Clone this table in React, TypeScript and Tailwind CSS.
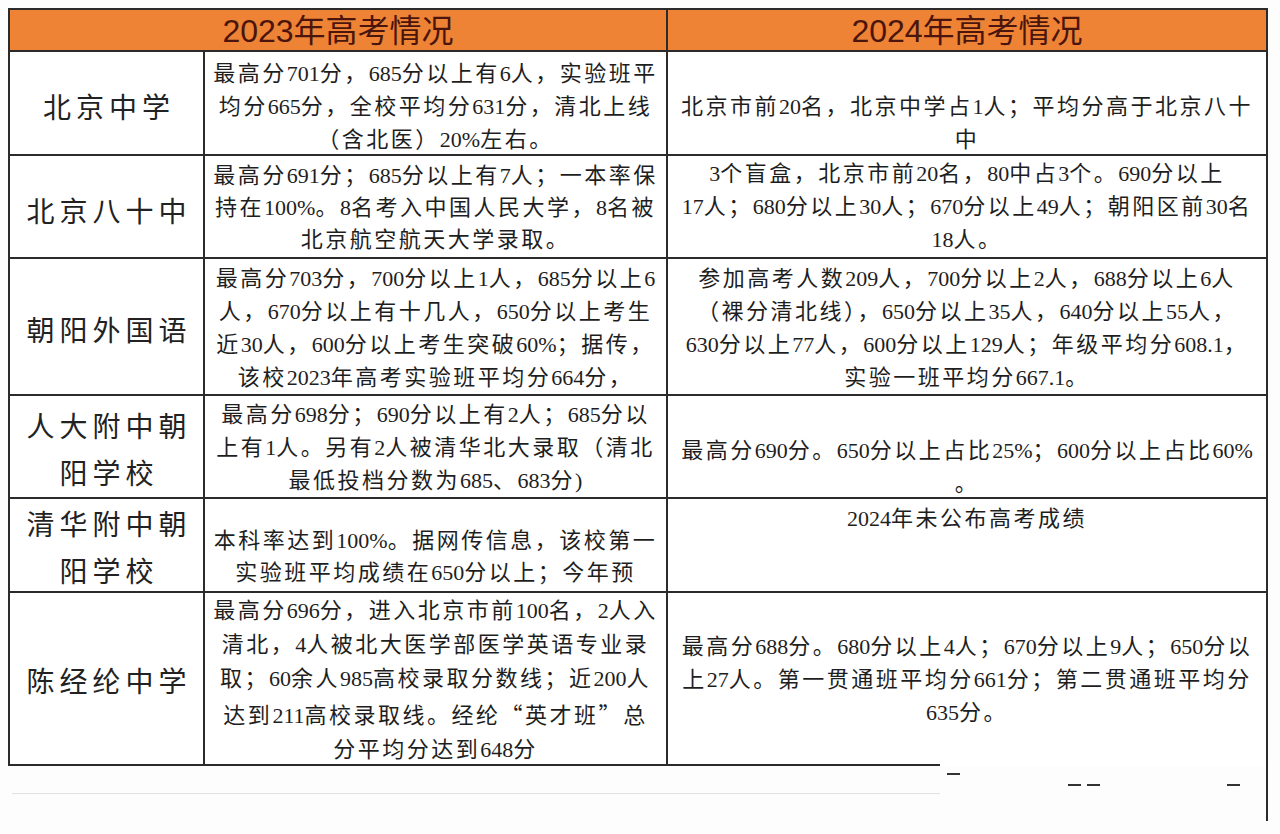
import React from "react";

type Row = {
  school: string[];
  sPt: string;
  a: string[];
  aPt: string;
  aL: string;
  b: string[];
  bPt: string;
  last?: boolean;
};

const rows: Row[] = [
  {
    school: ["北京中学"],
    sPt: "pt-[31px]",
    a: ["最高分701分，685分以上有6人，实验班平", "均分665分，全校平均分631分，清北上线", "（含北医）20%左右。"],
    aPt: "pt-[5px]",
    aL: "leading-[33px]",
    b: ["北京市前20名，北京中学占1人；平均分高于北京八十", "中"],
    bPt: "pt-[38px]",
  },
  {
    school: ["北京八十中"],
    sPt: "pt-[31px]",
    a: ["最高分691分；685分以上有7人；一本率保", "持在100%。8名考入中国人民大学，8名被", "北京航空航天大学录取。"],
    aPt: "pt-[4px]",
    aL: "leading-[32px]",
    b: ["3个盲盒，北京市前20名，80中占3个。690分以上", "17人；680分以上30人；670分以上49人；朝阳区前30名", "18人。"],
    bPt: "pt-[1px]",
  },
  {
    school: ["朝阳外国语"],
    sPt: "pt-[47px]",
    a: ["最高分703分，700分以上1人，685分以上6", "人，670分以上有十几人，650分以上考生", "近30人，600分以上考生突破60%；据传，", "该校2023年高考实验班平均分664分，"],
    aPt: "pt-[3px]",
    aL: "leading-[33px]",
    b: ["参加高考人数209人，700分以上2人，688分以上6人", "（裸分清北线），650分以上35人，640分以上55人，", "630分以上77人，600分以上129人；年级平均分608.1，", "实验一班平均分667.1。"],
    bPt: "pt-[3px]",
  },
  {
    school: ["人大附中朝", "阳学校"],
    sPt: "pt-[6px]",
    a: ["最高分698分；690分以上有2人；685分以", "上有1人。另有2人被清华北大录取（清北", "最低投档分数为685、683分)"],
    aPt: "pt-[2px]",
    aL: "leading-[33px]",
    b: ["最高分690分。650分以上占比25%；600分以上占比60%", "。"],
    bPt: "pt-[38px]",
  },
  {
    school: ["清华附中朝", "阳学校"],
    sPt: "pt-[1px]",
    a: ["本科率达到100%。据网传信息，该校第一", "实验班平均成绩在650分以上；今年预"],
    aPt: "pt-[26px]",
    aL: "leading-[32px]",
    b: ["2024年未公布高考成绩"],
    bPt: "pt-[3px]",
  },
  {
    school: ["陈经纶中学"],
    sPt: "pt-[64px]",
    a: ["最高分696分，进入北京市前100名，2人入", "清北，4人被北大医学部医学英语专业录", "取；60余人985高校录取分数线；近200人", "达到211高校录取线。经纶“英才班”总", "分平均分达到648分"],
    aPt: "pt-[1px]",
    aL: "leading-[34px]",
    b: ["最高分688分。680分以上4人；670分以上9人；650分以", "上27人。第一贯通班平均分661分；第二贯通班平均分", "635分。"],
    bPt: "pt-[37px]",
    last: true,
  },
];

function Rich({ text }: { text: string }) {
  const parts = text.split(/([0-9.%)]+|[“”])/);
  return (
    <>
      {parts.map((p, i) => {
        if (!p) return null;
        if (/^[0-9.%)]+$/.test(p)) {
          return (
            <span key={i} className="tracking-normal">
              {p}
            </span>
          );
        }
        if (/^[“”]$/.test(p)) {
          return (
            <span key={i} className="[font-family:'Noto_Sans_CJK_SC',sans-serif]">
              {p}
            </span>
          );
        }
        return <span key={i}>{p}</span>;
      })}
    </>
  );
}

function Lines({ lines, pt, lead }: { lines: string[]; pt: string; lead: string }) {
  return (
    <div
      className={`${pt} ${lead} text-[22px] tracking-[2.5px] text-[#1e1e1e] text-center whitespace-nowrap [font-family:'Liberation_Serif','Noto_Sans_CJK_SC',serif]`}
    >
      {lines.map((l, i) => (
        <div key={i}>
          <Rich text={l} />
        </div>
      ))}
    </div>
  );
}

const cell = "border-r-2 border-b-2 border-[#2b2b2b] bg-white overflow-hidden";
const head =
  "border-r-2 border-b-2 border-[#2b2b2b] bg-[#ee8235] flex items-center justify-center text-[32px] leading-none text-[#4a150c] [font-family:'Liberation_Sans','Noto_Sans_CJK_SC',sans-serif]";

export default function App() {
  return (
    <div className="w-[1280px] h-[834px] bg-[#fdfdfd] overflow-hidden pt-[8px] pl-[8px]">
      <div className="w-[1260px] grid grid-cols-[195px_463px_600px] grid-rows-[42px_104px_103px_137px_103px_94px_173px] border-l-2 border-t-2 border-[#2b2b2b]">
        <div className={`${head} col-span-2`}>
          <span className="pt-[1px]">2023年高考情况</span>
        </div>
        <div className={head}>
          <span className="pt-[1px]">2024年高考情况</span>
        </div>
        {rows.map((r, i) => (
          <React.Fragment key={i}>
            <div className={cell}>
              <div
                className={`${r.sPt} pl-[5px] text-center text-[28px] leading-[47px] tracking-[5px] text-[#222] whitespace-nowrap [font-family:'Noto_Sans_CJK_SC',sans-serif]`}
              >
                {r.school.map((s, k) => (
                  <div key={k}>{s}</div>
                ))}
              </div>
            </div>
            <div className={cell}>
              <Lines lines={r.a} pt={r.aPt} lead={r.aL} />
            </div>
            {r.last ? (
              <div className="border-r-2 border-[#2b2b2b] bg-white overflow-hidden flex flex-col">
                <Lines lines={r.b} pt={r.bPt} lead="leading-[33px]" />
                <div className="mt-auto w-[272px] h-[2px] bg-[#2b2b2b]" />
              </div>
            ) : (
              <div className={cell}>
                <Lines lines={r.b} pt={r.bPt} lead="leading-[33px]" />
              </div>
            )}
          </React.Fragment>
        ))}
      </div>
      <div className="w-[1260px] h-[55px] border-r-2 border-[#2b2b2b] flex flex-col">
        <div className="mt-[7px] h-[2px] flex">
          <div className="ml-[939px] w-[13px] bg-[#333]" />
        </div>
        <div className="mt-[9px] h-[2px] flex">
          <div className="ml-[1060px] w-[13px] bg-[#333]" />
          <div className="ml-[6px] w-[13px] bg-[#333]" />
          <div className="ml-[127px] w-[13px] bg-[#333]" />
        </div>
        <div className="mt-[7px] ml-[4px] w-[928px] h-[1px] bg-[#e2e2e2]" />
      </div>
    </div>
  );
}
